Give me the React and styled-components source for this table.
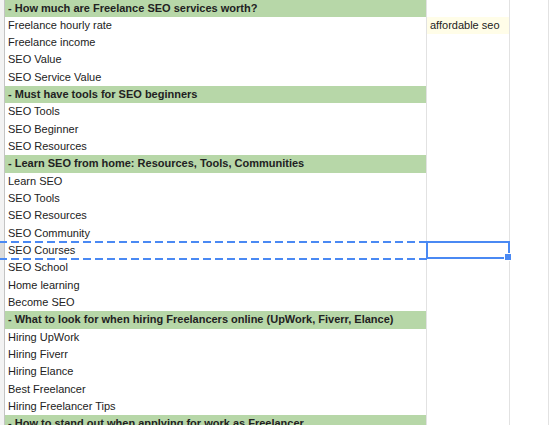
import React from "react";
import styled, { createGlobalStyle } from "styled-components";

const GlobalStyle = createGlobalStyle`
  html, body {
    margin: 0;
    padding: 0;
    background: #fff;
    overflow: hidden;
  }
  body {
    font-family: "Liberation Sans", Arial, sans-serif;
  }
`;

const ROW_H = 17.34;

const Sheet = styled.div`
  width: 549px;
  height: 425px;
  overflow: hidden;
  margin-top: -0.5px;
`;

const Row = styled.div`
  display: grid;
  grid-template-columns: 5px 422px 83px 1fr;
  height: ${ROW_H}px;
`;

const Gutter = styled.div`
  background: ${(p) => (p.$active ? "#dcdcdc" : "#f3f3f3")};
  border-right: 1px solid #c4c4c4;
  border-bottom: 1px solid #d6d6d6;
  box-sizing: border-box;
`;

const Cell = styled.div`
  position: relative;
  box-sizing: border-box;
  border-right: 1px solid #e2e2e2;
  border-bottom: 1px solid #e2e2e2;
  background: ${(p) => p.$bg || "#fff"};
  color: #222;
  font-size: 11px;
  font-weight: ${(p) => (p.$bold ? 700 : 400)};
  line-height: ${ROW_H}px;
  padding-left: 3px;
  white-space: nowrap;
`;

const Selected = styled.div`
  position: absolute;
  left: -1px;
  top: -1px;
  right: -1px;
  bottom: 0;
  border: 2px solid #4a89f3;
  z-index: 2;
`;

const FillHandle = styled.div`
  position: absolute;
  right: -4px;
  bottom: -4px;
  width: 6px;
  height: 6px;
  background: #4a89f3;
  border: 1px solid #fff;
`;

const Marquee = styled.div`
  position: absolute;
  left: -6px;
  top: -1px;
  right: -1px;
  bottom: -1px;
  z-index: 2;
  background-image: linear-gradient(to right, #4a89f3 8px, transparent 8px),
    linear-gradient(to right, #4a89f3 8px, transparent 8px);
  background-size: 12px 2px, 12px 2px;
  background-repeat: repeat-x;
  background-position: 0 0, 0 100%;
`;

const GREEN = "#b7d7a8";

const rows = [
  { t: "- How much are Freelance SEO services worth?", h: true },
  { t: "Freelance hourly rate", b: "affordable seo" },
  { t: "Freelance income" },
  { t: "SEO Value" },
  { t: "SEO Service Value" },
  { t: "- Must have tools for SEO beginners", h: true },
  { t: "SEO Tools" },
  { t: "SEO Beginner" },
  { t: "SEO Resources" },
  { t: "- Learn SEO from home: Resources, Tools, Communities", h: true },
  { t: "Learn SEO" },
  { t: "SEO Tools" },
  { t: "SEO Resources" },
  { t: "SEO Community" },
  { t: "SEO Courses", sel: true },
  { t: "SEO School" },
  { t: "Home learning" },
  { t: "Become SEO" },
  { t: "- What to look for when hiring Freelancers online (UpWork, Fiverr, Elance)", h: true },
  { t: "Hiring UpWork" },
  { t: "Hiring Fiverr" },
  { t: "Hiring Elance" },
  { t: "Best Freelancer" },
  { t: "Hiring Freelancer Tips" },
  { t: "- How to stand out when applying for work as Freelancer", h: true },
];

export default function App() {
  return (
    <>
      <GlobalStyle />
      <Sheet>
        {rows.map((r, i) => (
          <Row key={i}>
            <Gutter $active={r.sel} />
            <Cell $bold={r.h} $bg={r.h ? GREEN : undefined}>
              {r.t}
              {r.sel && <Marquee />}
            </Cell>
            <Cell $bg={r.b ? "#fffde8" : undefined}>
              {r.b}
              {r.sel && (
                <Selected>
                  <FillHandle />
                </Selected>
              )}
            </Cell>
            <Cell />
          </Row>
        ))}
      </Sheet>
    </>
  );
}
